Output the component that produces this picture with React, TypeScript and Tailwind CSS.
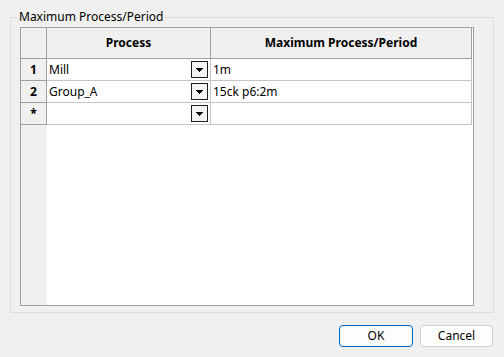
import React from 'react';

interface GridRow {
  id: string;
  label: string;
  process: string;
  period: string;
}

const rows: GridRow[] = [
  { id: '1', label: '1', process: 'Mill', period: '1m' },
  { id: '2', label: '2', process: 'Group_A', period: '15ck p6:2m' },
  { id: 'new', label: '*', process: '', period: '' },
];

const DropButton: React.FC = () => (
  <span className="flex h-[17px] w-[17px] shrink-0 items-center justify-center border border-[#1e1e1e] bg-[#f3f3f3]">
    <svg width="7" height="4" viewBox="0 0 7 4" shapeRendering="crispEdges">
      <path d="M0 0H7V1H6V2H5V3H4V4H3V3H2V2H1V1H0Z" fill="#000" />
    </svg>
  </span>
);

const App: React.FC = () => {
  return (
    <div className="flex h-[357px] w-[504px] flex-col bg-[#f0f0f0] font-['Noto_Sans',sans-serif] text-[12px] text-black">
      <fieldset className="mx-[10px] mt-[9px] border border-[#dcdcdc] pb-[6px] pl-[9px] pr-[19px] pt-[2px]">
        <legend className="-ml-[3px] px-[2px] leading-[16px]">Maximum Process/Period</legend>

        <div className="flex h-[279px] flex-col border border-[#a0a0a0] bg-white">
          {/* column headers */}
          <div className="flex h-[31px] shrink-0">
            <div className="w-[26px] border-b border-r border-[#a0a0a0] bg-[#f0f0f0]" />
            <div className="flex w-[164px] items-center justify-center border-b border-r border-[#a0a0a0] bg-[#f0f0f0] font-bold">
              Process
            </div>
            <div className="flex w-[261px] items-center justify-center border-b border-r border-[#a0a0a0] bg-[#f0f0f0] font-bold">
              Maximum Process/Period
            </div>
          </div>

          {rows.map((row) => (
            <div key={row.id} className="flex h-[22px] shrink-0">
              <div className="flex w-[26px] items-center justify-center border-b border-r border-[#a0a0a0] bg-[#f0f0f0] font-bold">
                {row.label}
              </div>
              <div className="flex w-[164px] items-center justify-between border-b border-r border-[#c4c4c4] pl-[2px] pr-[2px]">
                <span>{row.process}</span>
                <DropButton />
              </div>
              <div className="flex w-[261px] items-center border-b border-r border-[#c4c4c4] pl-[2px]">
                {row.period}
              </div>
            </div>
          ))}

          <div className="flex flex-1">
            <div className="w-[26px] bg-[#f0f0f0]" />
          </div>
        </div>
      </fieldset>

      <div className="mt-[12px] flex justify-end gap-[7px] pr-[11px]">
        <button className="flex h-[22px] w-[74px] items-center justify-center rounded-[4px] border border-[#0067c0] bg-[#fdfdfd]">
          OK
        </button>
        <button className="flex h-[22px] w-[73px] items-center justify-center rounded-[4px] border border-[#d0d0d0] bg-[#fdfdfd]">
          Cancel
        </button>
      </div>
    </div>
  );
};

export default App;
